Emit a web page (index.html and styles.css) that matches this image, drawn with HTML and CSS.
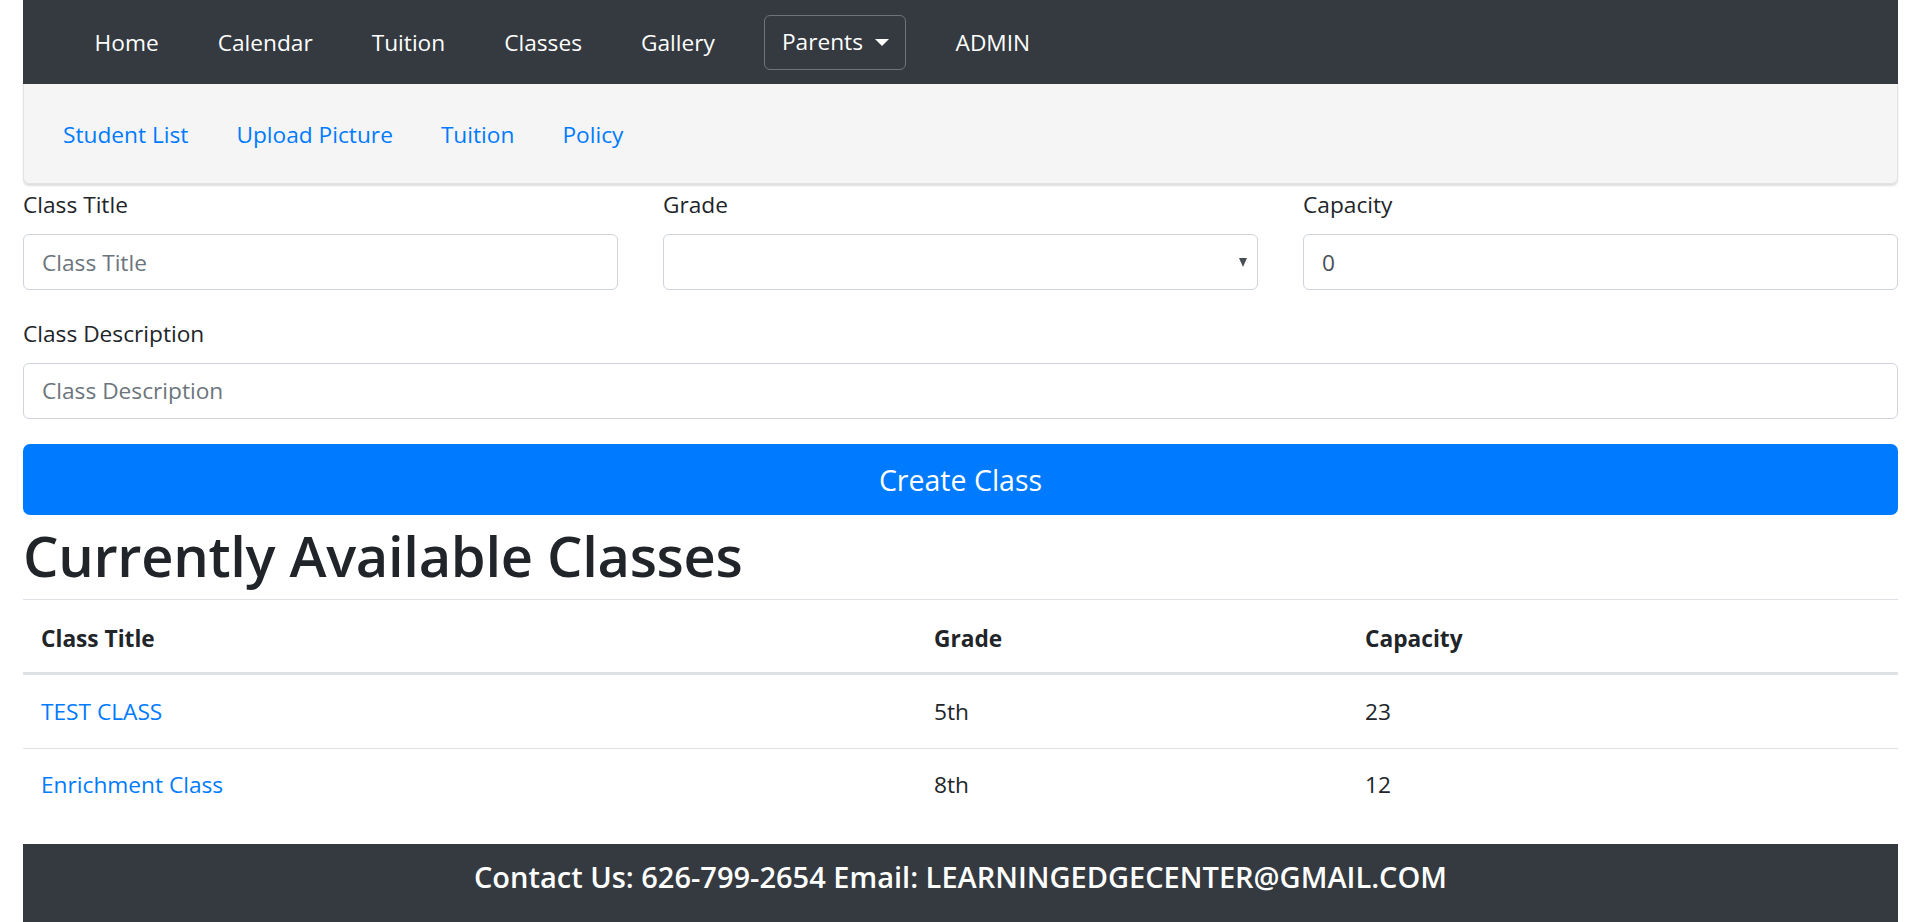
FILE: index.html
```html
<!DOCTYPE html>
<html lang="en">
<head>
<meta charset="utf-8">
<title>Classes - Admin</title>
<link rel="stylesheet" href="styles.css">
</head>
<body>
<div class="page">
  <nav class="topnav">
    <a class="topnav-link" href="#">Home</a>
    <a class="topnav-link" href="#">Calendar</a>
    <a class="topnav-link" href="#">Tuition</a>
    <a class="topnav-link" href="#">Classes</a>
    <a class="topnav-link" href="#">Gallery</a>
    <a class="topnav-toggle" href="#">Parents<span class="caret"></span></a>
    <a class="topnav-link" href="#">ADMIN</a>
  </nav>

  <div class="subnav">
    <a class="subnav-link" href="#">Student List</a>
    <a class="subnav-link" href="#">Upload Picture</a>
    <a class="subnav-link" href="#">Tuition</a>
    <a class="subnav-link" href="#">Policy</a>
  </div>

  <form class="class-form">
    <div class="form-grid">
      <div class="form-group">
        <label class="form-label" for="title">Class Title</label>
        <input class="form-control" id="title" type="text" placeholder="Class Title">
      </div>
      <div class="form-group">
        <label class="form-label" for="grade">Grade</label>
        <div class="select-wrap">
          <select class="form-control form-select" id="grade"><option></option></select>
        </div>
      </div>
      <div class="form-group">
        <label class="form-label" for="capacity">Capacity</label>
        <input class="form-control" id="capacity" type="number" value="0">
      </div>
    </div>
    <div class="form-group">
      <label class="form-label" for="desc">Class Description</label>
      <input class="form-control" id="desc" type="text" placeholder="Class Description">
    </div>
    <button class="btn-create" type="button">Create Class</button>
  </form>

  <h1 class="section-title">Currently Available Classes</h1>

  <table class="class-table">
    <thead>
      <tr>
        <th class="col-title">Class Title</th>
        <th class="col-grade">Grade</th>
        <th>Capacity</th>
      </tr>
    </thead>
    <tbody>
      <tr>
        <td><a class="table-link" href="#">TEST CLASS</a></td>
        <td>5th</td>
        <td>23</td>
      </tr>
      <tr>
        <td><a class="table-link" href="#">Enrichment Class</a></td>
        <td>8th</td>
        <td>12</td>
      </tr>
    </tbody>
  </table>

  <footer class="site-footer">
    <h5 class="footer-text">Contact Us: 626-799-2654 Email: LEARNINGEDGECENTER@GMAIL.COM</h5>
  </footer>
</div>
</body>
</html>
```

FILE: styles.css
```css
* {
  box-sizing: border-box;
}

html, body {
  margin: 0;
  padding: 0;
  background: #ffffff;
}

body {
  font-family: "Open Sans", "Noto Sans", sans-serif;
  font-size: 22.7px;
  line-height: 36px;
  color: #212529;
  overflow: hidden;
}

.page {
  padding: 0 22px 0 23px;
}

a {
  text-decoration: none;
}

/* Top navigation */
.topnav {
  display: flex;
  align-items: center;
  height: 84px;
  background: #343a40;
  padding-left: 42px;
}

.topnav-link {
  color: #ffffff;
  padding: 1px 29.5px 0;
  line-height: 36px;
}

.topnav-toggle {
  display: flex;
  align-items: center;
  height: 55px;
  margin: 0 20px 0 19.5px;
  padding: 0 16px 0 17px;
  border: 1.5px solid #6c757d;
  border-radius: 6px;
  color: #ffffff;
}

.caret {
  display: inline-block;
  width: 0;
  height: 0;
  margin-left: 12px;
  border-top: 7px solid #ffffff;
  border-left: 7px solid transparent;
  border-right: 7px solid transparent;
}

/* Sub navigation */
.subnav {
  display: flex;
  align-items: center;
  height: 100px;
  padding: 3px 0 0 15px;
  background: #f5f5f5;
  border: 1px solid #e3e3e3;
  border-top: 0;
  border-radius: 0 0 6px 6px;
  box-shadow: 0 2px 2px rgba(0, 0, 0, 0.13);
}

.subnav-link {
  color: #007bff;
  padding: 0 24px;
}

/* Form */
.class-form {
  margin: 3px 0 0;
}

.form-grid {
  display: grid;
  grid-template-columns: 1fr 1fr 1fr;
  column-gap: 45px;
}

.form-group {
  margin-bottom: 25.5px;
}

.form-label {
  display: block;
  margin-bottom: 11px;
}

.form-control {
  display: block;
  width: 100%;
  height: 56px;
  padding: 9px 18px;
  font-family: inherit;
  font-size: 22.7px;
  line-height: 36px;
  color: #495057;
  background: #ffffff;
  border: 1.5px solid #ced4da;
  border-radius: 6px;
  outline: none;
}

.form-control::placeholder {
  color: #6c757d;
  opacity: 1;
}

.form-control::-webkit-outer-spin-button,
.form-control::-webkit-inner-spin-button {
  -webkit-appearance: none;
  margin: 0;
}

.select-wrap {
  position: relative;
}

.form-select {
  -webkit-appearance: none;
  appearance: none;
}

.select-wrap::after {
  content: "";
  position: absolute;
  right: 11px;
  top: 24px;
  width: 0;
  height: 0;
  border-top: 9px solid #4a4f55;
  border-left: 4px solid transparent;
  border-right: 4px solid transparent;
  pointer-events: none;
}

.btn-create {
  display: block;
  width: 100%;
  height: 71px;
  margin: 0;
  padding: 2px 0 0;
  font-family: inherit;
  font-size: 28.5px;
  line-height: 45px;
  color: #ffffff;
  background: #007bff;
  border: 0;
  border-radius: 7px;
}

/* Heading */
.section-title {
  margin: 0 0 12px;
  padding-top: 4px;
  height: 72px;
  font-size: 56px;
  line-height: 72px;
  font-weight: 600;
  letter-spacing: -0.3px;
}

/* Table */
.class-table {
  width: 100%;
  border-collapse: collapse;
  margin-bottom: 23px;
}

.class-table th,
.class-table td {
  text-align: left;
  padding: 18.5px 18px 18px;
  line-height: 36px;
  border-top: 1px solid #dee2e6;
}

.class-table th {
  font-weight: 700;
  padding-top: 20.5px;
  padding-bottom: 15.5px;
}

.class-table thead th {
  border-bottom: 3px solid #dee2e6;
}

.col-title {
  width: 893px;
}

.col-grade {
  width: 431px;
}

.table-link {
  color: #007bff;
}

/* Footer */
.site-footer {
  background: #343a40;
  height: 90px;
  padding-top: 15px;
  text-align: center;
}

.footer-text {
  margin: 0;
  color: #ffffff;
  font-size: 29px;
  line-height: 36px;
  font-weight: 600;
}
```
